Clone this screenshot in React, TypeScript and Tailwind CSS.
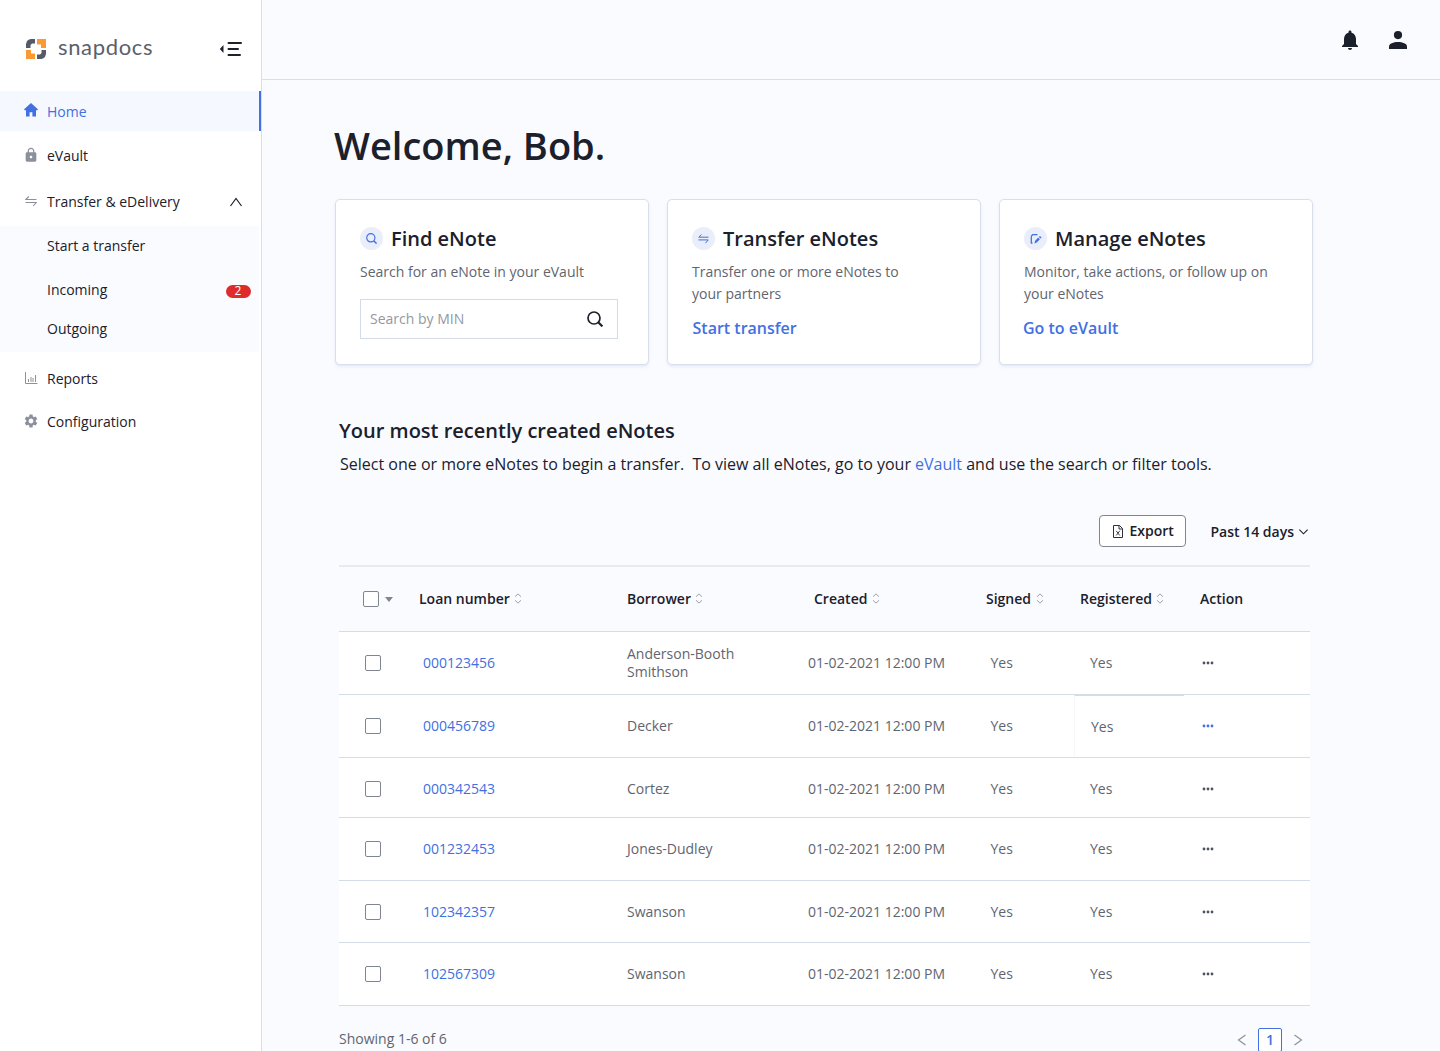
import React from "react";
import { MdLock, MdSettings, MdNotifications } from "react-icons/md";

type IconProps = { className?: string };

function Logo() {
  return (
    <svg viewBox="0 0 20 20" className="h-5 w-5" fill="none">
      <path d="M11 0h9v9h-5V5.500h-4z" fill="#fb9a33" />
      <path d="M0 11h5v3.500h4V20H0z" fill="#fb9a33" />
      <path d="M9 0v4.500H6L4.500 6v3H0V5l1-3 2-1.500L5 0z" fill="#555a66" />
      <path d="M11 20v-4.500h3l1.500-1.500v-3H20v4l-1 3-2 1.500-2 .5z" fill="#555a66" />
    </svg>
  );
}

function CollapseIcon() {
  return (
    <svg viewBox="0 0 24 16" className="h-4 w-6" fill="none" stroke="#1d222c" strokeWidth="2" strokeLinecap="round">
      <path d="M9.500 2H22M9.500 8H19M9.500 14H21" />
      <path d="M4.500 4v8L.8 8z" fill="#1d222c" stroke="none" />
    </svg>
  );
}

function HomeIcon() {
  return (
    <svg viewBox="0 0 14 14" className="-mt-1 h-[14px] w-[14px]" fill="#4170e3">
      <path d="M7 0 .1 6.300l.5.900H2v6.300h3.600V9.200h2.800v4.300H12V7.200h1.400l.5-.9z" />
    </svg>
  );
}

function PersonIcon() {
  return (
    <svg viewBox="0 0 18 18" className="h-[18px] w-[18px]" fill="#1b202b">
      <circle cx="9" cy="4.100" r="4.100" />
      <path d="M0 18v-2.500C0 12.700 4.500 11 9 11s9 1.700 9 4.500V18z" />
    </svg>
  );
}

function SearchIcon({ className }: IconProps) {
  return (
    <svg viewBox="0 0 16 16" className={className} fill="none" stroke="currentColor" strokeWidth="1.700">
      <circle cx="7" cy="7" r="6" />
      <path d="M11.200 11.200 15.400 15.400" strokeWidth="2.200" />
    </svg>
  );
}

function SwapIcon({ className }: IconProps) {
  return (
    <svg viewBox="0 0 12 11" className={className} fill="none" stroke="currentColor" strokeWidth="1.100">
      <path d="M3.800.5.800 3.500H11.500M.5 6.500H11.200L8.200 10" />
    </svg>
  );
}

function ChartIcon() {
  return (
    <svg viewBox="0 0 13 12" className="h-3 w-[13px]" fill="none" stroke="#8b919c">
      <path d="M.5 0V11.500H12.500" />
      <path d="M3.500 7v3M6 5v5M8 6v4M10.500 3v7" />
    </svg>
  );
}

function EditIcon() {
  return (
    <svg viewBox="0 0 12 11" className="h-[11px] w-3" fill="none" stroke="#4170e3" strokeWidth="1.300">
      <path d="M1.300 10.500V3.500M1.200 3.300 2.800 1.600H7.500M1 10.200h1.500" />
      <path d="M4.500 10.500l.5-2.600 3.200-3.400 1.700 1.700-3.200 3.300zM8.900 3.900l1-1 1.700 1.700-1 1z" fill="#4170e3" stroke="none" />
    </svg>
  );
}

function FileIcon() {
  return (
    <svg viewBox="0 0 10 13" className="h-[13px] w-[10px]" fill="none" stroke="#2c323d">
      <path d="M.5.5h6l3 3v9h-9z" />
      <path d="M6 .5V4h3.500" />
      <path d="M3.200 5.800l3.600 4.700M6.800 5.800l-3.600 4.700" strokeWidth=".9" />
    </svg>
  );
}

function SortIcon() {
  return (
    <svg viewBox="0 0 8 11" className="-mt-px h-[11px] w-2" fill="none" stroke="#9aa0aa" strokeWidth="1">
      <path d="M1 3.700 4 .9l3 2.800M1 7.300l3 2.800 3-2.800" />
    </svg>
  );
}

function Chevron({ d, className }: { d: string; className: string }) {
  return (
    <svg viewBox="0 0 12 12" className={className} fill="none" stroke="currentColor" strokeWidth="1.200">
      <path d={d} />
    </svg>
  );
}

function Dots({ active }: { active?: boolean }) {
  return (
    <svg viewBox="0 0 12 4" className={active ? "h-1 w-3 text-[#4170e3]" : "h-1 w-3 text-[#4d535f]"} fill="currentColor">
      <circle cx="2" cy="2" r="1.400" />
      <circle cx="6" cy="2" r="1.400" />
      <circle cx="10" cy="2" r="1.400" />
    </svg>
  );
}

function NavItem({ icon, label, className, children }: { icon?: React.ReactNode; label: string; className: string; children?: React.ReactNode }) {
  return (
    <a className={"flex items-center pl-6 " + className}>
      <span className="flex w-[23px] shrink-0 items-center">{icon}</span>
      <span className="flex-1">{label}</span>
      {children}
    </a>
  );
}

function Sidebar() {
  return (
    <aside className="flex w-[262px] shrink-0 flex-col border-r border-[#d9deea] bg-white text-[#1b202b]">
      <div className="flex h-[91px] items-center pl-[26px] pr-[18px] pt-[7px]">
        <Logo />
        <span className="ml-3 flex-1 pb-1 font-['Lato'] text-[22px] leading-6 tracking-[0.65px] text-[#5b606c]">snapdocs</span>
        <CollapseIcon />
      </div>
      <NavItem
        icon={<HomeIcon />}
        label="Home"
        className="h-10 border-r-2 border-[#4170e3] bg-[#f5f8fe] pt-[2px] text-[#4170e3]"
      />
      <NavItem icon={<MdLock className="-ml-px -mt-[2px] h-4 w-4 text-[#8b919c]" />} label="eVault" className="h-[50px]" />
      <NavItem icon={<SwapIcon className="ml-px -mt-[2px] h-[11px] w-3 text-[#8b919c]" />} label="Transfer & eDelivery" className="h-[42px]">
        <Chevron d="M.5 10 6 2.500 11.500 10" className="mr-[19px] h-3 w-3" />
      </NavItem>
      <div className="mr-[2px] mt-[3px] flex h-[126px] flex-col bg-[#fafbff]">
        <NavItem label="Start a transfer" className="h-10" />
        <NavItem label="Incoming" className="h-12">
          <span className="mr-[8.500px] mt-[2px] flex h-[13px] w-[25px] items-center justify-center rounded-full bg-[#e02b2b] text-xs leading-none text-white">2</span>
        </NavItem>
        <NavItem label="Outgoing" className="h-[30px]" />
      </div>
      <NavItem icon={<span className="-mt-[2px] ml-px"><ChartIcon /></span>} label="Reports" className="h-[54px]" />
      <NavItem icon={<MdSettings className="-ml-px -mt-[2px] h-4 w-4 text-[#8b919c]" />} label="Configuration" className="h-8" />
    </aside>
  );
}

function Card({ icon, title, children }: { icon: React.ReactNode; title: string; children: React.ReactNode }) {
  return (
    <section className="h-[166px] w-[314px] rounded-[5px] border border-[#d8dfea] bg-white px-6 pt-[27px] shadow-[0_2px_3px_rgba(190,205,235,0.35)]">
      <div className="flex h-[23px] items-center gap-2">
        <span className="flex h-[23px] w-[23px] items-center justify-center rounded-full bg-[#e9eefa] text-[#4170e3]">{icon}</span>
        <h2 className="text-xl font-semibold text-[#1b202b]">{title}</h2>
      </div>
      {children}
    </section>
  );
}

const columns = "grid grid-cols-[80px_208px_181px_178px_94px_120px_110px] items-center";

const rows = [
  { loan: "000123456", name: "Anderson-Booth Smithson", size: "h-[63px]" },
  { loan: "000456789", name: "Decker", size: "h-[63px]" },
  { loan: "000342543", name: "Cortez", size: "h-[60px] pt-[2px]" },
  { loan: "001232453", name: "Jones-Dudley", size: "h-[63px]" },
  { loan: "102342357", name: "Swanson", size: "h-[62px]" },
  { loan: "102567309", name: "Swanson", size: "h-[63px]" },
];

const headings = [
  { label: "Loan number", pad: "gap-1", sort: true },
  { label: "Borrower", pad: "gap-1", sort: true },
  { label: "Created", pad: "gap-[5px] pl-[6px]", sort: true },
  { label: "Signed", pad: "gap-[5px]", sort: true },
  { label: "Registered", pad: "gap-1", sort: true },
  { label: "Action", pad: "", sort: false },
];

function Checkbox() {
  return <span className="block h-4 w-4 shrink-0 rounded-[2px] border border-[#7f8591] bg-white" />;
}

function NotesTable() {
  return (
    <div className="ml-1 w-[971px]">
      <div className={"h-[67px] border-b border-t-2 border-b-[#d5dce8] border-t-[#e8eaef] font-semibold text-[#1b202b] " + columns}>
        <div className="flex items-center gap-[6px] pl-6">
          <Checkbox />
          <svg viewBox="0 0 8 5" className="mt-px h-[5px] w-2" fill="#7f8591"><path d="M0 0h8L4 5z" /></svg>
        </div>
        {headings.map((h) => (
          <div key={h.label} className={"flex items-center whitespace-nowrap " + h.pad}>
            {h.label}
            {h.sort && <SortIcon />}
          </div>
        ))}
      </div>
      {rows.map((r, i) => (
        <div key={r.loan} className={"border-b border-[#d5dce8] bg-white text-[#5f6570] " + r.size + " " + columns}>
          <div className="pl-[26px]"><Checkbox /></div>
          <div className="pl-1 text-[#4170e3]">{r.loan}</div>
          <div className="w-[130px] leading-[18px]">{r.name}</div>
          <div className="whitespace-nowrap">01-02-2021 12:00 PM</div>
          <div className="pl-[4.500px]">Yes</div>
          {i === 1 ? (
            <div className="-ml-[6px] mr-4 flex h-full items-center border-l border-t border-l-[#f6f7fa] border-t-[#d5dae8] pl-4 pt-px">Yes</div>
          ) : (
            <div className="pl-[10px]">Yes</div>
          )}
          <div className="pl-[2px]"><Dots active={i === 1} /></div>
        </div>
      ))}
    </div>
  );
}

export default function App() {
  return (
    <div className="flex h-[1051px] w-[1440px] overflow-hidden bg-[#fafbff] font-['Open_Sans',sans-serif] text-sm text-[#1b202b]">
      <Sidebar />
      <div className="flex flex-1 flex-col">
        <header className="flex h-20 shrink-0 items-center justify-end border-b border-[#d9deea] pr-[33px] text-[#1b202b]">
          <MdNotifications className="mr-[27px] h-6 w-6" />
          <PersonIcon />
        </header>
        <main className="ml-[73px] flex w-[978px] flex-col">
          <h1 className="-ml-px mt-[38px] h-[54px] text-[38px] font-semibold leading-[54px]">Welcome, Bob.</h1>
          <div className="mt-[27px] flex gap-[18px]">
            <Card icon={<SearchIcon className="h-[11px] w-[11px]" />} title="Find eNote">
              <p className="mt-[11px] leading-[22px] text-[#5f6570]">Search for an eNote in your eVault</p>
              <div className="mt-4 flex h-10 w-[258px] items-center justify-between border border-[#d3dbe8] pl-[9px] pr-[14px] text-[#9398a3]">
                Search by MIN
                <SearchIcon className="h-4 w-4 text-[#1b202b]" />
              </div>
            </Card>
            <Card icon={<SwapIcon className="h-[10px] w-[11px]" />} title="Transfer eNotes">
              <p className="mt-[11px] w-[230px] leading-[22px] text-[#5f6570]">Transfer one or more eNotes to your partners</p>
              <a className="ml-[0.5px] mt-[11px] block text-base font-semibold leading-6 text-[#4170e3]">Start transfer</a>
            </Card>
            <Card icon={<EditIcon />} title="Manage eNotes">
              <p className="mt-[11px] w-[260px] leading-[22px] text-[#5f6570]">Monitor, take actions, or follow up on your eNotes</p>
              <a className="-ml-px mt-[11px] block text-base font-semibold leading-6 text-[#4170e3]">Go to eVault</a>
            </Card>
          </div>
          <h2 className="ml-1 mt-[52px] text-xl font-semibold leading-7">Your most recently created eNotes</h2>
          <p className="ml-[5px] mt-[7px] whitespace-pre text-base leading-6">
            Select one or more eNotes to begin a transfer.{"  "}To view all eNotes, go to your <a className="text-[#4170e3]">eVault</a> and use the search or filter tools.
          </p>
          <div className="mb-[18px] mt-[39px] flex h-8 items-center justify-end pr-1 font-semibold">
            <button className="mr-6 flex h-8 w-[87px] items-center gap-[6px] rounded-[4px] border border-[#7f8591] bg-white pl-[13px]">
              <FileIcon />
              Export
            </button>
            <span className="mr-1 mt-[2px] whitespace-nowrap">Past 14 days</span>
            <Chevron d="M1.500 4 6 8.500 10.500 4" className="h-[11px] w-[11px]" />
          </div>
          <NotesTable />
          <footer className="-mt-px ml-1 flex h-[68px] w-[971px] items-center justify-between text-[#5f6570]">
            <span>Showing 1-6 of 6</span>
            <div className="mt-[2px] flex items-center gap-[10px] pr-[6px] text-[#8b919c]">
              <Chevron d="M9.500 1 2.500 6l7 5" className="h-3 w-3" />
              <span className="flex h-6 w-6 items-center justify-center rounded-[2px] border border-[#4170e3] bg-white font-semibold text-[#4170e3]">1</span>
              <Chevron d="M2.500 1l7 5-7 5" className="h-3 w-3" />
            </div>
          </footer>
        </main>
      </div>
    </div>
  );
}
